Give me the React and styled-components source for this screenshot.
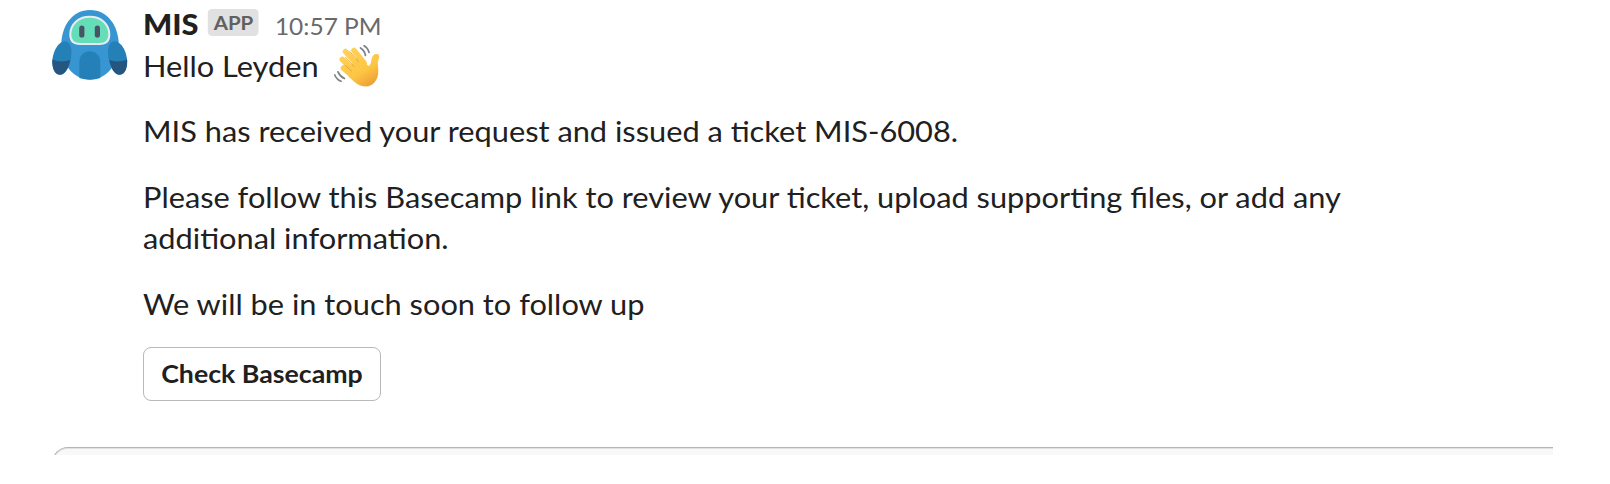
import styled, { createGlobalStyle } from "styled-components";

const App = () => {
  return (
    <Page>
      <GlobalStyle />
      <Message>
        <Avatar viewBox="0 0 76 76">
          <path
            d="M38 4C20 4 10 20 9.300 37C9 58 21 73.500 38 73.500C55 73.500 67 58 66.700 37C66 20 56 4 38 4Z"
            fill="#3796d2"
          />
          <path
            d="M27.300 72V56C27.300 41.500 48.300 41.500 48.300 56V72Q38 75.500 27.300 72Z"
            fill="#2680b8"
          />
          <path
            d="M12.700 35.300C17 35.300 19.500 40 19.500 46C19.500 56 15 68.700 8 68.700C2.500 68.700 0.300 62 0.300 56C0.300 48 5 36 12.700 35.300Z"
            fill="#2680b8"
          />
          <path
            d="M62.800 35.300C58.500 35.300 56 40 56 46C56 56 60.500 68.700 67.500 68.700C73 68.700 75.200 62 75.200 56C75.200 48 70.500 36 62.800 35.300Z"
            fill="#2680b8"
          />
          <path
            d="M0.400 53.500Q9 57 18.200 54C16.500 62 13 68.700 8 68.700C2 68.700 0 61 0.400 53.500Z"
            fill="#26557f"
          />
          <path
            d="M75.100 53.500Q66.500 57 57.300 54C59 62 62.500 68.700 67.500 68.700C73.500 68.700 75.500 61 75.100 53.500Z"
            fill="#26557f"
          />
          <path
            d="M37.800 10.800C26 10.800 18.300 18.500 18.300 28.500C18.300 35 21.500 38 28 38H47.600C54 38 57.300 35 57.300 28.500C57.300 18.500 49.600 10.800 37.800 10.800Z"
            fill="#65ddb9"
            stroke="#e6ecf0"
            strokeWidth="2"
          />
          <rect x="27.200" y="19.600" width="5.200" height="12" rx="2.600" fill="#465464" />
          <rect x="42.800" y="19.600" width="5.200" height="12" rx="2.600" fill="#465464" />
        </Avatar>
        <Content>
          <Header>
            <Sender>MIS</Sender>
            <Badge>APP</Badge>
            <Time>10:57 PM</Time>
          </Header>
          <Greeting>
            <Wide>Hello Leyden</Wide>
            <Wave viewBox="0 0 46 42">
              <defs>
                <linearGradient
                  id="skin"
                  gradientUnits="userSpaceOnUse"
                  x1="10"
                  y1="4"
                  x2="34"
                  y2="42"
                >
                  <stop offset="0" stopColor="#ffd35a" />
                  <stop offset="0.65" stopColor="#fdc544" />
                  <stop offset="1" stopColor="#eda033" />
                </linearGradient>
              </defs>
              <path
                d="M20 5.500L30 18M11.500 6.500L25 22M8.300 14.500L21 27M9.500 23L20 32"
                fill="none"
                stroke="url(#skin)"
                strokeWidth="5.600"
                strokeLinecap="round"
              />
              <path
                d="M24 11L34.500 21C36.500 20 37 18 37.500 14.500C38 10.500 40.500 8.500 43 9C45.800 9.800 45.600 12 44.600 14.500C43 18 44.600 22 44.300 27C44 35 39 41.500 32 41.500C25 41.500 21 37.500 14 31L17 20Z"
                fill="url(#skin)"
              />
              <path
                d="M15.800 6.500L24.500 16.500M11.500 12.500L20 21.500M11.500 20.500L17.500 26"
                fill="none"
                stroke="#e39d35"
                strokeWidth="0.900"
                strokeLinecap="round"
              />
              <path
                d="M26.500 3Q30.500 5.500 31.500 10.500M30 0.800Q34 3 35 7.500M0.800 30Q2.500 34.500 7 36.300M4 26.800Q6 31.500 10.500 33.500"
                fill="none"
                stroke="#7d8286"
                strokeWidth="1.700"
                strokeLinecap="round"
              />
            </Wave>
          </Greeting>
          <Text>MIS has received your request and issued a ticket MIS-6008.</Text>
          <Text>
            Please follow this Basecamp link to review your ticket, upload
            supporting files, or add any additional information.
          </Text>
          <Text>We will be in touch soon to follow up</Text>
          <Button>
            <ButtonLabel>Check Basecamp</ButtonLabel>
          </Button>
        </Content>
      </Message>
      <Composer />
    </Page>
  );
};

export default App;

const GlobalStyle = createGlobalStyle`
  * {
    box-sizing: border-box;
  }
  body {
    margin: 0;
    background: #fff;
  }
`;

const Page = styled.div`
  height: 484px;
  overflow: hidden;
  padding: 4px 57px 0 52px;
  color: #212021;
  font-family: Lato, sans-serif;
  font-size: 28.5px;
  line-height: 41.5px;
`;

const Message = styled.div`
  display: flex;
  height: 443px;
`;

const Avatar = styled.svg`
  width: 76px;
  height: 76px;
  margin-top: 2px;
  margin-right: 15px;
  flex-shrink: 0;
`;

const Content = styled.div`
  width: 1230px;
`;

/* the lettering is slightly extended, so text is scaled sideways */
const Header = styled.div`
  display: flex;
  align-items: baseline;
  height: 41.5px;
  transform: scaleX(1.0795);
  transform-origin: left;
`;

const Sender = styled.span`
  font-weight: 900;
`;

const Badge = styled.span`
  align-self: flex-start;
  height: 27px;
  margin-top: 5px;
  margin-left: 9px;
  padding: 0 5px;
  border-radius: 4px;
  background: #e1e1e1;
  color: #606061;
  font-size: 19px;
  font-weight: 700;
  line-height: 28px;
`;

const Time = styled.span`
  margin-left: 15px;
  color: #6a696a;
  font-size: 22.7px;
`;

const Greeting = styled.div`
  display: flex;
  height: 41.5px;
`;

const Wide = styled.span`
  transform: scaleX(1.0795);
  transform-origin: left;
`;

const Wave = styled.svg`
  width: 46px;
  height: 42px;
  margin-left: 28px;
  margin-top: -1px;
`;

const Text = styled.p`
  width: 1139px;
  margin: 24px 0 0;
  transform: scaleX(1.0795);
  transform-origin: left;
`;

const Button = styled.button`
  display: block;
  width: 238px;
  height: 54px;
  margin-top: 22px;
  padding: 0 0 1px;
  border: 1px solid #b9b9b9;
  border-radius: 8px;
  background: #fff;
  color: #212021;
  font-family: inherit;
  font-size: 24.75px;
  font-weight: 700;
`;

const ButtonLabel = styled.span`
  display: block;
  transform: scaleX(1.0795);
`;

const Composer = styled.div`
  height: 8px;
  overflow: hidden;

  &:before {
    content: "";
    display: block;
    height: 40px;
    border: 1px solid #b5b5b5;
    border-right: none;
    border-radius: 16px 0 0 0;
    background: #f8f8f8;
    box-shadow: inset 0 1px 0 #e2e2e2;
  }
`;
